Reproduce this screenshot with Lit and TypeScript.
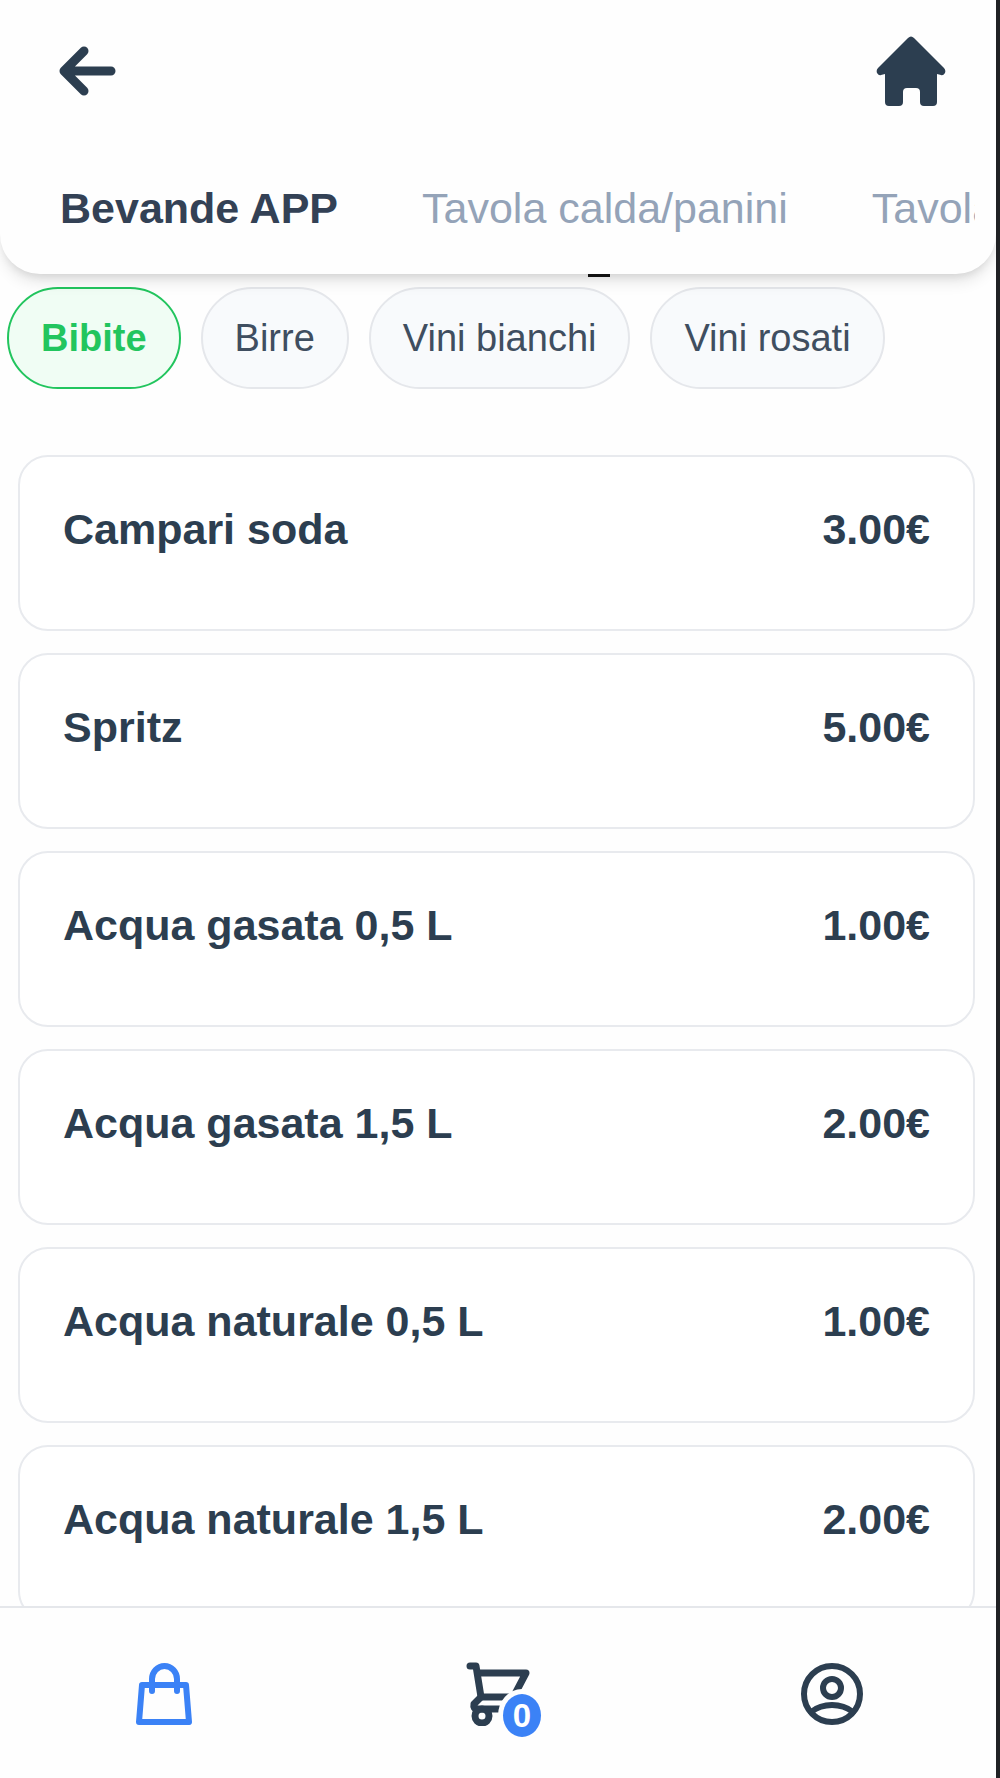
import { LitElement, html, css, svg } from "lit";
import { customElement, property, state } from "lit/decorators.js";
import { classMap } from "lit/directives/class-map.js";

const icons = {
  back: svg`<path d="M53 25H6M26 5L6 25L26 45" />`,
  bag: svg`
    <path d="M10 23H54L57 60H7Z" />
    <path d="M20 29V17A12.500 13 0 0 1 45 17V29" />`,
  cart: svg`
    <path d="M4 4H10L15 35H44" />
    <path d="M12 11H60L50 30" />
    <path d="M15 35L8 42Q7 47 11 47H40" />
    <circle cx="16" cy="54" r="7" />`,
  user: svg`
    <circle cx="32" cy="32" r="28" />
    <circle cx="32" cy="26" r="9" />
    <path d="M11 50Q20 43 32 43T53 50" />`,
};

@customElement("menu-item")
export class MenuItem extends LitElement {
  @property() name = "";
  @property() price = "";

  static styles = css`
    :host {
      display: flex;
      flex: none;
      justify-content: space-between;
      gap: 24px;
      padding: 48px 43px 76px;
      border: 2px solid #e8eaee;
      border-radius: 30px;
      background: #fff;
      color: #2c3e50;
      font-weight: 700;
      font-size: 43px;
      line-height: 48px;
    }
  `;

  render() {
    return html`<span>${this.name}</span><span>${this.price}</span>`;
  }
}

@customElement("app-root")
export class AppRoot extends LitElement {
  @state() private category = "Bevande APP";
  @state() private filter = "Bibite";

  private categories = ["Bevande APP", "Tavola calda/panini", "Tavola fredda"];
  private filters = ["Bibite", "Birre", "Vini bianchi", "Vini rosati"];
  private items = [
    { name: "Campari soda", price: "3.00€" },
    { name: "Spritz", price: "5.00€" },
    { name: "Acqua gasata 0,5 L", price: "1.00€" },
    { name: "Acqua gasata 1,5 L", price: "2.00€" },
    { name: "Acqua naturale 0,5 L", price: "1.00€" },
    { name: "Acqua naturale 1,5 L", price: "2.00€" },
  ];

  static styles = css`
    :host {
      display: flex;
      flex-direction: column;
      box-sizing: border-box;
      height: 100vh;
      overflow: hidden;
      border-right: 4px solid #202124;
      background: #fefefe;
      color: #2c3e50;
      font-family: "Liberation Sans", Arial, sans-serif;
    }
    button {
      margin: 0;
      padding: 0;
      border: 0;
      background: none;
      color: inherit;
      font: inherit;
      white-space: nowrap;
      cursor: pointer;
    }
    svg {
      display: block;
      fill: none;
      stroke: currentColor;
      stroke-width: 6;
      stroke-linecap: round;
      stroke-linejoin: round;
    }
    header {
      position: relative;
      z-index: 1;
      flex: none;
      padding: 36px 21px 42px 0;
      border-radius: 0 0 40px 40px;
      background: #fefefe;
      box-shadow:
        0 10px 16px -3px rgba(0, 0, 0, 0.11),
        0 5px 10px -4px rgba(0, 0, 0, 0.11);
    }
    .bar {
      display: flex;
      align-items: center;
      justify-content: space-between;
      padding: 0 29px 0 58px;
    }
    .back {
      stroke-width: 9;
    }
    .home {
      fill: currentColor;
      stroke: none;
    }
    .tabs {
      display: flex;
      gap: 84px;
      margin-top: 78px;
      padding-left: 60px;
      overflow: hidden;
    }
    .tab {
      flex: none;
      color: #94a3b8;
      font-size: 43px;
      line-height: 48px;
    }
    .tab.active {
      color: #334155;
      font-weight: 700;
    }
    .dash {
      position: absolute;
      top: 100%;
      left: 59%;
      width: 22px;
      height: 3px;
      background: #111;
    }
    main {
      display: flex;
      flex: 1;
      flex-direction: column;
      min-height: 0;
      overflow: hidden;
    }
    .chips {
      display: flex;
      flex: none;
      gap: 20px;
      padding: 13px 7px 66px;
    }
    .chip {
      padding: 27px 32px;
      border: 2px solid #e5e7eb;
      border-radius: 51px;
      background: #f8fafc;
      color: #3f4e60;
      font-size: 38px;
      line-height: 44px;
    }
    .chip.active {
      border-color: #22c55e;
      background: #f0fdf4;
      color: #22c55e;
      font-weight: 700;
    }
    .list {
      display: flex;
      flex-direction: column;
      gap: 22px;
      padding: 0 21px 22px 18px;
    }
    nav {
      display: flex;
      flex: none;
      justify-content: space-between;
      padding: 54px 132px 52px;
      border-top: 2px solid #e5e7eb;
      background: #fefefe;
    }
    .link {
      position: relative;
      display: block;
      color: #2c3e50;
      text-decoration: none;
    }
    .link.active {
      color: #3b82f6;
    }
    .cart {
      stroke-width: 7;
    }
    .badge {
      position: absolute;
      top: 32px;
      left: 37px;
      width: 38px;
      border-radius: 50%;
      background: #3b82f6;
      box-shadow: 0 0 0 5px #fefefe;
      color: #fff;
      font-weight: 700;
      font-size: 33px;
      line-height: 43px;
      text-align: center;
    }
  `;

  render() {
    return html`
      <header>
        <div class="bar">
          <button aria-label="Indietro">
            <svg class="back" width="58" height="50" viewBox="0 0 58 50">${icons.back}</svg>
          </button>
          <button aria-label="Home">
            <svg class="home" width="70" height="70" viewBox="0 0 70 70">
              <path
                d="M32 2Q35 -1 38 2L68 32Q70 34 69 37Q67 40 65 39L61 38V66Q61 70 57 70H48Q44 70 44 66V56Q44 52 40 52H31Q27 52 27 56V66Q27 70 23 70H13Q9 70 9 66V38L5 39Q3 40 1 37Q0 34 2 32Z"
              />
            </svg>
          </button>
        </div>
        <div class="tabs">
          ${this.categories.map(
            (c) => html`<button
              class=${classMap({ tab: true, active: c === this.category })}
              @click=${() => (this.category = c)}
            >${c}</button>`,
          )}
        </div>
        <span class="dash"></span>
      </header>
      <main>
        <div class="chips">
          ${this.filters.map(
            (f) => html`<button
              class=${classMap({ chip: true, active: f === this.filter })}
              @click=${() => (this.filter = f)}
            >${f}</button>`,
          )}
        </div>
        <div class="list">
          ${this.items.map(
            (i) => html`<menu-item .name=${i.name} .price=${i.price}></menu-item>`,
          )}
        </div>
      </main>
      <nav>
        <a class="link active" href="#menu" aria-label="Menu">
          <svg width="64" height="64" viewBox="0 0 64 64">${icons.bag}</svg>
        </a>
        <a class="link" href="#carrello" aria-label="Carrello">
          <svg class="cart" width="64" height="64" viewBox="0 0 64 64">${icons.cart}</svg>
          <span class="badge">0</span>
        </a>
        <a class="link" href="#profilo" aria-label="Profilo">
          <svg width="64" height="64" viewBox="0 0 64 64">${icons.user}</svg>
        </a>
      </nav>
    `;
  }
}
